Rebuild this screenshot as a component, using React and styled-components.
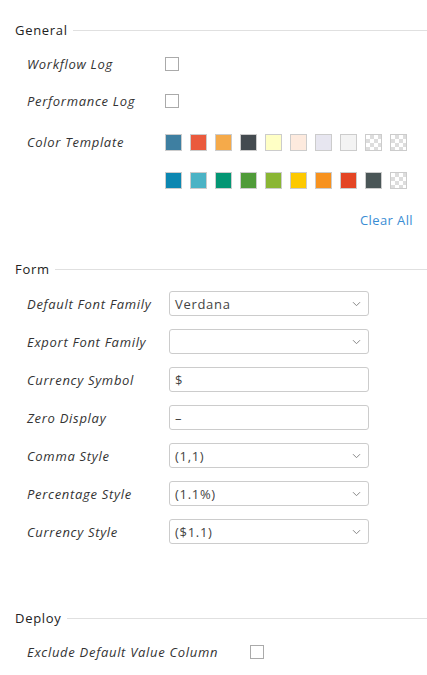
import React from "react";
import styled, { createGlobalStyle } from "styled-components";

const Global = createGlobalStyle`
  html, body { margin: 0; padding: 0; background: #fff; }
  body {
    font-family: "Open Sans", "Noto Sans", sans-serif;
    color: #222;
    letter-spacing: 0.7px;
  }
  * { box-sizing: border-box; }
`;

const Page = styled.div`
  width: 427px;
  padding: 20px 0 20px 15px;
`;

const SectionHeader = styled.div`
  display: flex;
  align-items: center;
  height: 20px;
  margin-top: ${({ top }) => top || 0}px;
  font-size: 13px;
  font-weight: 500;
  color: #222;

  &::after {
    content: "";
    flex: 1;
    height: 1px;
    background: #e0e0e0;
    margin-left: 5px;
  }
`;

const Row = styled.div`
  display: flex;
  align-items: ${({ top }) => (top ? "flex-start" : "center")};
  min-height: ${({ h }) => h || 30}px;
  margin-top: ${({ gap }) => gap || 0}px;
  padding-left: 12px;
`;

const Label = styled.div`
  width: ${({ w }) => w || 142}px;
  flex-shrink: 0;
  font-size: 13px;
  font-style: italic;
  color: #333;
  white-space: nowrap;
  line-height: ${({ lh }) => lh || "normal"};
`;

const Checkbox = styled.span`
  display: inline-block;
  width: 14px;
  height: 14px;
  border: 1px solid #aaa;
  background: #fff;
`;

const Swatches = styled.div`
  display: grid;
  grid-template-columns: repeat(10, 17px);
  column-gap: 8px;
  row-gap: 21px;
  margin-left: -4px;
`;

const Swatch = styled.span`
  width: 17px;
  height: 17px;
  border: 1px solid #ccc;
  background: ${({ c }) => c || "#fff"};
  ${({ c }) =>
    !c &&
    `background-image:
      linear-gradient(45deg, #ddd 25%, transparent 25%, transparent 75%, #ddd 75%),
      linear-gradient(45deg, #ddd 25%, transparent 25%, transparent 75%, #ddd 75%);
    background-size: 8px 8px;
    background-position: 0 0, 4px 4px;`}
`;

const ClearAll = styled.div`
  margin-top: 21px;
  height: 20px;
  line-height: 20px;
  padding-right: 14px;
  text-align: right;
  font-size: 13px;
  letter-spacing: 0.4px;
  color: #3a8dd4;
`;

const FieldBox = styled.div`
  position: relative;
  width: 200px;
  height: 25px;
  border: 1px solid #ccc;
  border-radius: 3px;
  display: flex;
  align-items: center;
  padding: 0 5px;
  font-size: 13px;
  color: #444;
  background: #fff;
`;

const Chevron = styled.svg`
  position: absolute;
  right: 7px;
  top: 9px;
  width: 9px;
  height: 6px;
`;

function Field({ value, select }) {
  return (
    <FieldBox>
      {value}
      {select && (
        <Chevron viewBox="0 0 9 6">
          <path d="M1 1.2 L4.5 4.7 L8 1.2" fill="none" stroke="#888" strokeWidth="1" />
        </Chevron>
      )}
    </FieldBox>
  );
}

const row1 = ["#3e7fa1", "#ea5a3d", "#f5aa4a", "#444b50", "#ffffc5", "#fdeade", "#e7e6f0", "#f3f3f3", null, null];
const row2 = ["#0c87b1", "#4bb3c5", "#049674", "#4f9b39", "#8ab634", "#fdc901", "#f7921f", "#e44524", "#4a5657", null];

const formRows = [
  ["Default Font Family", "Verdana", true],
  ["Export Font Family", "", true],
  ["Currency Symbol", "$", false],
  ["Zero Display", "–", false],
  ["Comma Style", "(1,1)", true],
  ["Percentage Style", "(1.1%)", true],
  ["Currency Style", "($1.1)", true],
];

export default function App() {
  return (
    <Page>
      <Global />
      <SectionHeader>General</SectionHeader>
      <Row gap={9}>
        <Label w={138}>Workflow Log</Label>
        <Checkbox />
      </Row>
      <Row gap={7}>
        <Label w={138}>Performance Log</Label>
        <Checkbox />
      </Row>
      <Row gap={18} top>
        <Label w={142} lh="17px">Color Template</Label>
        <Swatches>
          {row1.concat(row2).map((c, i) => (
            <Swatch key={i} c={c} />
          ))}
        </Swatches>
      </Row>
      <ClearAll>Clear All</ClearAll>

      <SectionHeader top={29}>Form</SectionHeader>
      {formRows.map(([label, value, select], i) => (
        <Row key={label} h={25} gap={i === 0 ? 12 : 13}>
          <Label>{label}</Label>
          <Field value={value} select={select} />
        </Row>
      ))}

      <SectionHeader top={64}>Deploy</SectionHeader>
      <Row gap={9}>
        <Label w={223}>Exclude Default Value Column</Label>
        <Checkbox />
      </Row>
    </Page>
  );
}
